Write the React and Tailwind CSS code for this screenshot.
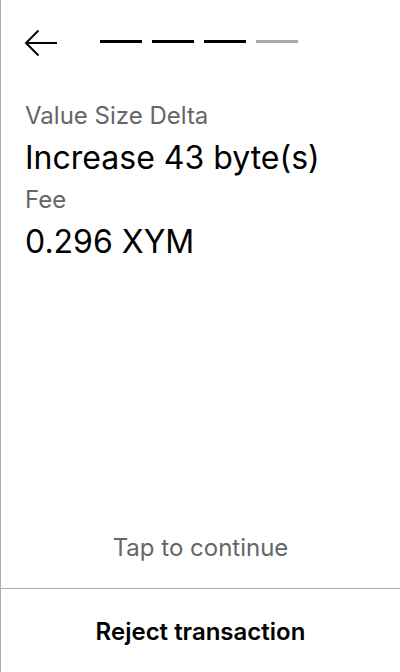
import React from 'react';

const Steps = ({ total = 4, current = 3 }) => (
  <div className="flex gap-[10px]">
    {Array.from({ length: total }).map((_, i) => (
      <div
        key={i}
        className={i < current ? 'w-[42px] h-[3px] bg-black' : 'w-[42px] h-[3px] bg-[#aaaaaa]'}
      />
    ))}
  </div>
);

const App = () => {
  return (
    <div
      className="h-[672px] flex flex-col bg-white border-l border-[#aaaaaa] text-black"
      style={{ fontFamily: 'Inter, "Noto Sans", sans-serif' }}
    >
      {/* header */}
      <div className="flex items-start pt-[29px] pl-[23px]">
        <button className="w-[34px] h-[28px]">
          <svg width="34" height="28" viewBox="0 0 34 28" fill="none" stroke="black" strokeWidth="2">
            <path d="M2 14 H33" />
            <path d="M14.5 1.5 L2 14 L14.5 26.5" />
          </svg>
        </button>
        <div className="ml-[42px] mt-[11px]">
          <Steps />
        </div>
      </div>

      {/* details */}
      <div className="mt-[45px] px-6">
        <div className="text-[24px] leading-[28px] text-[#666666]">Value Size Delta</div>
        <div className="text-[32px] leading-[56px]">Increase 43 byte(s)</div>
        <div className="text-[24px] leading-[28px] text-[#666666]">Fee</div>
        <div className="text-[32px] leading-[56px]">0.296 XYM</div>
      </div>

      <div className="flex-1" />

      <div className="mb-[26px] text-center text-[24px] leading-[28px] text-[#666666]">Tap to continue</div>

      <div className="h-px bg-[#aaaaaa]" />

      <button className="h-[83px] pt-[3px] flex items-center justify-center text-[24px] font-semibold">
        Reject transaction
      </button>
    </div>
  );
};

export default App;
